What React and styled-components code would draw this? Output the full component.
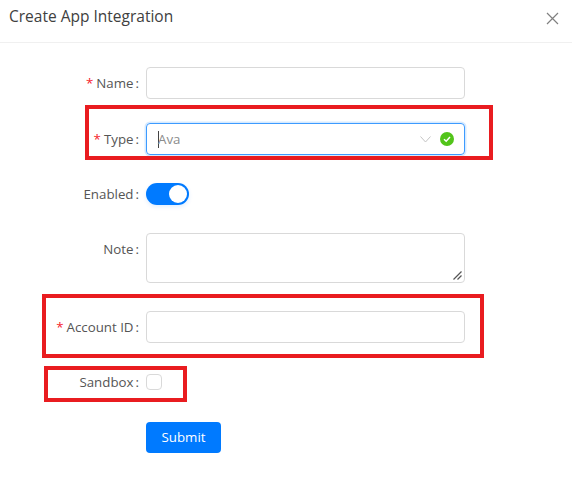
import React from 'react';
import styled, { createGlobalStyle } from 'styled-components';

const GlobalStyle = createGlobalStyle`
    * {
        box-sizing: border-box;
    }
    body {
        margin: 0;
        background: #fff;
        font-family: "Open Sans", "Noto Sans", sans-serif;
        color: #555;
    }
`;

const Dialog = styled.div`
    width: 572px;
    height: 482px;
    overflow: hidden;
    background: #fff;
`;

const Header = styled.header`
    display: flex;
    justify-content: space-between;
    align-items: center;
    height: 43px;
    padding: 0 13px 10px 9px;
    border-bottom: 1px solid #f0f0f0;
`;

const Title = styled.h2`
    margin: 0;
    font-size: 15.5px;
    font-weight: 500;
    color: #404040;
`;

const CloseIcon = styled.svg`
    display: block;
    width: 13px;
    height: 13px;
    margin-top: 4px;
    stroke: #808080;
    stroke-width: 1.2;
    fill: none;
`;

const Form = styled.form`
    display: flex;
    flex-direction: column;
    padding-top: 24px;
`;

const Row = styled.div`
    position: relative;
    display: grid;
    grid-template-columns: 138px 319px;
    column-gap: 8px;
    align-items: ${({ $top }) => ($top ? 'start' : 'center')};
    min-height: 32px;
    margin-bottom: ${({ $gap }) => $gap}px;
`;

const Label = styled.label`
    display: flex;
    justify-content: flex-end;
    align-items: center;
    height: 32px;
    font-size: 13.3px;
    color: #555;
    white-space: nowrap;

    &::after {
        content: ':';
        margin-left: 2px;
        margin-right: -1px;
    }
`;

const Star = styled.span`
    margin-right: 3px;
    color: #f5222d;
`;

const Input = styled.input`
    display: block;
    width: 100%;
    height: 32px;
    padding: 0 11px;
    border: 1px solid #d9d9d9;
    border-radius: 4px;
    outline: none;
    background: #fff;
`;

const SelectBox = styled.div`
    display: flex;
    align-items: center;
    width: 100%;
    height: 32px;
    padding: 0 10px 0 11px;
    border: 1px solid #3d9bff;
    border-radius: 4px;
    box-shadow: 0 0 0 1.5px rgba(0, 122, 255, 0.16);
    font-size: 13.3px;
    color: #8c8c8c;
`;

const Caret = styled.span`
    width: 1px;
    height: 17px;
    background: #444;
`;

const SelectValue = styled.span`
    flex: 1;
    margin-left: -1px;
`;

const Chevron = styled.svg`
    width: 11px;
    height: 7px;
    margin-right: 9px;
    stroke: #c4c4c4;
    stroke-width: 1;
    fill: none;
`;

const SuccessIcon = styled.svg`
    width: 14px;
    height: 14px;
`;

const NoteBox = styled.div`
    position: relative;
    height: 50px;
    border: 1px solid #d9d9d9;
    border-radius: 4px;
    background: #fff;
`;

const Grip = styled.svg`
    position: absolute;
    right: 2px;
    bottom: 2px;
    width: 9px;
    height: 9px;
    stroke: #555;
    stroke-width: 1.2;
    fill: none;
`;

const Switch = styled.span`
    position: relative;
    display: block;
    width: 43px;
    height: 22px;
    border-radius: 11px;
    background: #007aff;
    box-shadow: 0 2px 4px rgba(0, 122, 255, 0.12);

    &::after {
        content: '';
        position: absolute;
        top: 2px;
        right: 2px;
        width: 18px;
        height: 18px;
        border-radius: 50%;
        background: #fff;
    }
`;

const Checkbox = styled.span`
    display: block;
    width: 16px;
    height: 16px;
    border: 1px solid #d9d9d9;
    border-radius: 4px;
    background: #fff;
`;

const SubmitButton = styled.button`
    grid-column: 2;
    width: 75px;
    height: 31px;
    padding: 0;
    border: none;
    border-radius: 4px;
    background: #007aff;
    color: #fff;
    font-family: inherit;
    font-size: 13.3px;
    font-weight: 500;
`;

// red annotation frames drawn on top of the form
const Highlight = styled.div`
    position: absolute;
    top: ${({ $y }) => $y}px;
    left: ${({ $x }) => $x}px;
    width: ${({ $w }) => $w}px;
    height: ${({ $h }) => $h}px;
    border: 4px solid #e91c20;
    pointer-events: none;
`;

function App() {
    return (
        <Dialog>
            <GlobalStyle />
            <Header>
                <Title>Create App Integration</Title>
                <CloseIcon viewBox="0 0 13 13">
                    <path d="M1 1L12 12M12 1L1 12" />
                </CloseIcon>
            </Header>
            <Form>
                <Row $gap={24}>
                    <Label><Star>*</Star>Name</Label>
                    <Input />
                </Row>
                <Row $gap={23}>
                    <Highlight $x={85} $y={-18} $w={408} $h={55} />
                    <Label><Star>*</Star>Type</Label>
                    <SelectBox>
                        <Caret />
                        <SelectValue>Ava</SelectValue>
                        <Chevron viewBox="0 0 11 7">
                            <path d="M0.5 0.5L5.5 6L10.5 0.5" />
                        </Chevron>
                        <SuccessIcon viewBox="0 0 14 14">
                            <circle cx="7" cy="7" r="7" fill="#52c41a" />
                            <path d="M4 7.2L6.2 9.2L10 5" stroke="#fff" strokeWidth="1.5" fill="none" />
                        </SuccessIcon>
                    </SelectBox>
                </Row>
                <Row $gap={23}>
                    <Label>Enabled</Label>
                    <Switch />
                </Row>
                <Row $gap={28} $top>
                    <Label>Note</Label>
                    <NoteBox>
                        <Grip viewBox="0 0 9 9">
                            <path d="M0.5 8.5L8.5 0.5M4.5 8.5L8.5 4.5" />
                        </Grip>
                    </NoteBox>
                </Row>
                <Row $gap={23}>
                    <Highlight $x={42} $y={-17} $w={442} $h={64} />
                    <Label><Star>*</Star>Account ID</Label>
                    <Input />
                </Row>
                <Row $gap={23}>
                    <Highlight $x={44} $y={0} $w={143} $h={36} />
                    <Label>Sandbox</Label>
                    <Checkbox />
                </Row>
                <Row $gap={0}>
                    <SubmitButton type="button">Submit</SubmitButton>
                </Row>
            </Form>
        </Dialog>
    );
}

export default App;
